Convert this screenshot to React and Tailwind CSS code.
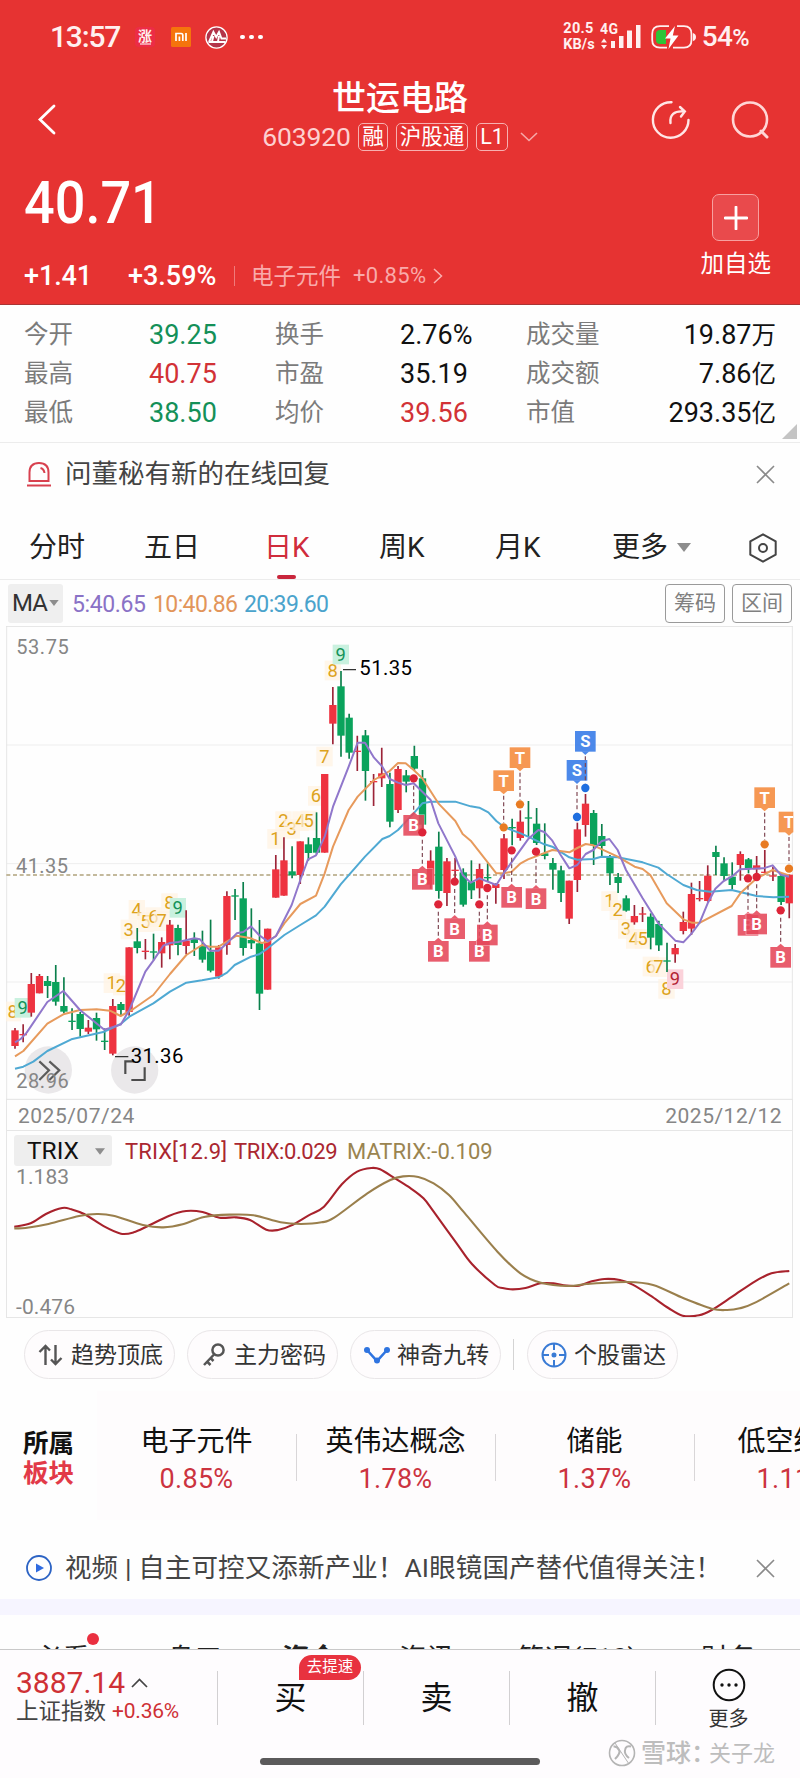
import React from "react";

const R = "#ee3340";
const G = "#0aa35c";

// [bodyTop, bodyBottom, high, low, up] — y grows downward; equal body values draw a doji
const CANDLES = [
  [1231, 1278, 1224, 1286, 1], [1244, 1244, 1213, 1267, 1], [1092, 1178, 1059, 1190, 1], [1068, 1120, 1062, 1120, 1],
  [1083, 1098, 1068, 1134, 0], [1086, 1145, 1035, 1157, 0], [1158, 1175, 1072, 1180, 0], [1204, 1204, 1165, 1230, 0],
  [1182, 1227, 1176, 1250, 0], [1223, 1235, 1200, 1242, 1], [1194, 1228, 1178, 1262, 0], [1264, 1264, 1225, 1290, 0],
  [1158, 1301, 1137, 1306, 1], [1152, 1170, 1146, 1187, 0], [982, 1176, 982, 1187, 1], [964, 984, 924, 1000, 0],
  [994, 994, 957, 1018, 1], [996, 996, 941, 1021, 0], [966, 1000, 952, 1043, 1], [914, 976, 900, 1018, 1],
  [924, 975, 914, 1006, 0], [962, 978, 871, 1003, 1], [957, 969, 937, 1008, 0], [978, 1019, 932, 1028, 0],
  [995, 1052, 899, 1057, 0], [982, 1070, 975, 1076, 1], [828, 975, 814, 1004, 1], [828, 828, 807, 900, 0],
  [835, 984, 786, 1007, 0], [960, 970, 865, 987, 0], [970, 1121, 900, 1170, 0], [926, 1109, 926, 1109, 1],
  [748, 833, 705, 833, 1], [721, 827, 652, 827, 1], [754, 766, 679, 775, 0], [664, 765, 664, 792, 1],
  [673, 699, 652, 722, 0], [654, 698, 577, 703, 0], [462, 698, 462, 698, 1], [255, 311, 201, 373, 1],
  [199, 347, 153, 410, 0], [293, 398, 281, 416, 0], [394, 394, 347, 453, 1], [346, 453, 330, 542, 0],
  [485, 485, 462, 558, 1], [460, 475, 383, 501, 1], [492, 605, 458, 622, 0], [447, 570, 438, 579, 1],
  [466, 485, 450, 517, 0], [408, 446, 377, 452, 0], [475, 614, 450, 625, 0], [722, 794, 691, 806, 1],
  [680, 813, 635, 836, 0], [724, 819, 714, 858, 1], [751, 751, 714, 775, 1], [757, 854, 745, 860, 0],
  [786, 811, 721, 837, 0], [747, 805, 731, 835, 1], [773, 773, 730, 783, 0], [792, 804, 790, 851, 1],
  [655, 750, 642, 777, 1], [623, 623, 596, 676, 0], [605, 654, 571, 662, 1], [594, 594, 543, 650, 0],
  [611, 669, 564, 675, 0], [700, 708, 610, 718, 0], [729, 749, 714, 809, 0], [751, 819, 737, 846, 0],
  [782, 896, 782, 912, 1], [628, 780, 608, 816, 1], [551, 615, 522, 650, 1], [579, 676, 570, 735, 0],
  [648, 678, 612, 710, 0], [714, 760, 705, 795, 0], [771, 789, 759, 819, 0], [835, 872, 826, 875, 0],
  [888, 907, 855, 914, 1], [882, 882, 861, 906, 1], [890, 953, 880, 988, 0], [912, 976, 902, 993, 0],
  [1023, 1023, 968, 1056, 0], [984, 1003, 972, 1028, 1], [906, 933, 875, 943, 1], [822, 926, 788, 945, 1],
  [836, 836, 783, 844, 1], [767, 843, 736, 845, 1], [696, 711, 677, 765, 0], [730, 768, 712, 780, 0],
  [770, 795, 727, 809, 0], [702, 735, 694, 782, 1], [718, 746, 714, 760, 0], [736, 748, 708, 775, 1],
  [757, 757, 690, 760, 1], [768, 768, 740, 783, 1], [768, 846, 760, 855, 0], [764, 850, 764, 895, 1],
];

const MA5 =
  "45,1267 62,1257 80,1238 142,1146 190,1113 240,1170 313,1229 362,1214 388,1170 436,1055 460,1022 490,977 510,969 535,966 583,955 600,958 630,992 656,992 681,970 710,940 730,936 753,919 777,945 803,964 828,948 875,855 901,780 924,718 948,706 974,650 999,560 1046,440 1073,368 1095,368 1122,413 1147,440 1169,477 1194,488 1217,495 1241,490 1292,540 1315,610 1366,710 1388,765 1412,788 1438,775 1489,795 1513,757 1584,658 1615,630 1633,636 1657,662 1682,705 1708,745 1732,735 1757,702 1780,690 1804,664 1828,657 1853,690 1878,750 1928,835 1975,910 2026,962 2050,967 2075,940 2099,908 2123,850 2146,806 2171,783 2195,770 2221,748 2290,745 2318,736 2342,764 2367,770";
const MA10 =
  "45,1309 70,1293 142,1211 190,1183 240,1170 290,1168 330,1172 362,1188 400,1167 460,1125 510,1062 559,1005 606,975 630,980 656,980 710,947 753,955 785,969 803,965 828,948 853,910 901,852 948,827 974,760 999,680 1046,570 1073,530 1122,480 1169,453 1194,429 1217,430 1241,450 1267,475 1315,550 1366,603 1388,642 1412,662 1489,760 1513,760 1535,755 1562,730 1584,718 1657,690 1708,697 1732,684 1757,672 1780,676 1853,710 1904,740 1928,747 1951,765 2000,850 2050,898 2075,908 2100,908 2195,858 2221,820 2270,775 2318,750 2367,766";
const MA20 =
  "45,1346 70,1340 100,1325 142,1293 214,1258 313,1235 362,1212 388,1190 460,1150 510,1115 559,1088 606,1081 656,1072 681,1058 704,1035 753,1010 777,1003 803,985 853,945 901,915 948,886 974,860 1022,793 1095,710 1147,657 1169,648 1194,630 1241,580 1267,550 1292,545 1366,545 1412,559 1438,563 1465,577 1489,603 1513,622 1562,640 1584,650 1633,673 1657,680 1708,712 1732,719 1780,717 1804,710 1853,712 1928,727 1975,743 2000,762 2050,795 2090,810 2130,815 2195,810 2270,828 2320,832 2367,830";

const BUYS = [[1241, 475], [1267, 637], [1315, 853], [1364, 785], [1438, 853], [1462, 804], [1535, 691], [1608, 695], [2244, 775], [2270, 771], [2342, 871]];
const TRADES = [[1511, 622], [1560, 553], [2294, 673], [2367, 746]];
const SELLS = [[1731, 591], [1756, 504]];

const COUNTS = [
  [8, 38, 1193], [9, 68, 1182, "g"], [1, 335, 1108], [2, 363, 1115], [3, 386, 947], [4, 410, 888], [5, 436, 925],
  [6, 460, 910], [7, 485, 922], [8, 508, 868], [9, 533, 882, "g"], [1, 826, 675], [2, 850, 622], [3, 875, 645],
  [4, 901, 622], [5, 926, 620], [6, 948, 546], [7, 973, 428], [8, 998, 170], [9, 1022, 122, "g"], [1, 1828, 862],
  [2, 1853, 889], [3, 1878, 945], [4, 1902, 975], [5, 1928, 975], [6, 1952, 1058], [7, 1975, 1060], [8, 1999, 1125],
  [9, 2025, 1096, "r"],
];

const COUNT_STYLE = {
  g: { bg: "#c9f1df", fg: "#14935a" },
  r: { bg: "#fbd2da", fg: "#b32435" },
  y: { bg: "#fff3e2", fg: "#dda31c" },
};

function Flag({ x, dot, up, color, dotColor, label }) {
  const top = up ? dot - 171 : dot + 110;
  const tip = up
    ? `${x - 12},${top + 61} ${x + 12},${top + 61} ${x},${top + 72}`
    : `${x - 12},${top + 1} ${x + 12},${top + 1} ${x},${top - 10}`;
  return (
    <g>
      <line x1={x} x2={x} y1={up ? top + 76 : dot + 22} y2={up ? dot - 14 : top - 10} stroke="#7d4450" strokeWidth="3.5" strokeDasharray="12 8" />
      <circle cx={x} cy={dot} r="12.5" fill={dotColor} />
      <g opacity="0.88">
        <rect x={x - 33} y={top - 2} width="66" height="66" fill="#fff" opacity="0.6" />
        <rect x={x - 31} y={top} width="62" height="62" fill={color} />
        <polygon points={tip} fill={color} />
      </g>
      <text x={x} y={top + 49} fontSize="50" fontWeight="700" fill="#fff" textAnchor="middle">{label}</text>
    </g>
  );
}

function KChart() {
  return (
    <svg viewBox="18 18 2364 1422" className="block h-[474px] w-[788px] font-['Roboto','Noto_Sans_CJK_SC',sans-serif]">
      <defs>
        <clipPath id="plot"><rect x="18" y="18" width="2362" height="1422" /></clipPath>
      </defs>
      <g stroke="#eeeeee" strokeWidth="3">
        <path d="M19 375H2378M19 731H2378M19 1086H2378" />
        <path d="M20 18V1440M2377 18V1440" stroke="#e6e6e6" />
        <path d="M18 19H2378M18 1438H2378" stroke="#e2e2e2" />
      </g>
      <circle cx="145" cy="1350" r="71" fill="#eae8ea" />
      <circle cx="404" cy="1350" r="71" fill="#eae8ea" />
      <path d="M118 1324L147 1351L118 1380M148 1324L178 1351L148 1380" fill="none" stroke="#5c5c5c" strokeWidth="6.5" />
      <path d="M376 1362V1324H402M434 1342V1380H394" fill="none" stroke="#4c4c4c" strokeWidth="6.5" />
      <g fontSize="60" fill="#868686">
        <text x="49" y="102" textLength="157">53.75</text>
        <text x="48" y="760" textLength="156">41.35</text>
        <text x="49" y="1404" textLength="157">28.96</text>
      </g>
      <path d="M19 765H2378" stroke="#b0a27c" strokeWidth="4" strokeDasharray="12 8" />
      <g clipPath="url(#plot)">
        {COUNTS.map(([n, x, y, k], i) => {
          const c = COUNT_STYLE[k || "y"];
          return (
            <g key={i}>
              <rect x={x - 24} y={y - 48} width="49" height="59" fill={c.bg} opacity={k ? 1 : 0.72} />
              <text x={x} y={y} fontSize="55" fill={c.fg} textAnchor="middle">{n}</text>
            </g>
          );
        })}
        {CANDLES.map(([a, b, h, l, up], i) => {
          const x = 45 + 24.45 * i;
          const flat = a === b;
          return (
            <g key={i}>
              <line x1={x} x2={x} y1={h} y2={l} stroke={up ? "#9c2438" : "#0a7f4b"} strokeWidth="5" />
              <rect x={x - 11} y={flat ? a - 2 : a} width="22" height={flat ? 4 : b - a} fill={up ? R : G} />
            </g>
          );
        })}
        <g fill="none" strokeWidth="6" strokeLinejoin="round">
          <polyline points={MA20} stroke="#4fa9d3" />
          <polyline points={MA10} stroke="#e79a5c" />
          <polyline points={MA5} stroke="#9077cb" />
        </g>
        {BUYS.map(([x, d]) => <Flag key={x} x={x} dot={d} color="#e5475a" dotColor="#dd2438" label="B" />)}
        {TRADES.map(([x, d]) => <Flag key={x} x={x} dot={d} up color="#f58a3c" dotColor="#e87b22" label="T" />)}
        {SELLS.map(([x, d]) => <Flag key={x} x={x} dot={d} up color="#3479e8" dotColor="#1f6fe0" label="S" />)}
      </g>
      <path d="M1029 149H1068M345 1310H385" stroke="#333" strokeWidth="3.5" />
      <g fontSize="61" fontWeight="400" fill="#000">
        <text x="1078" y="166" textLength="158">51.35</text>
        <text x="392" y="1328" textLength="158">31.36</text>
      </g>
    </svg>
  );
}

const TRIX = [
  [28, 410], [60, 400], [90, 372], [122, 354], [140, 358], [165, 372], [205, 410], [237, 431], [262, 427], [290, 408], [332, 377],
  [365, 363], [397, 366], [430, 383], [462, 382], [490, 390], [522, 419], [545, 420], [570, 407], [605, 376], [635, 350], [670, 283],
  [700, 245], [728, 234], [745, 238], [775, 266], [805, 295], [830, 325], [850, 365], [895, 460], [925, 522], [970, 585], [985, 594],
  [1005, 598], [1030, 594], [1060, 580], [1085, 580], [1110, 587], [1135, 587], [1160, 574], [1185, 567], [1215, 570], [1240, 584],
  [1275, 617], [1310, 654], [1338, 677], [1370, 676], [1395, 660], [1435, 620], [1480, 574], [1512, 550], [1547, 543],
];
const MATRIX = [
  [28, 415], [50, 414], [95, 402], [155, 378], [190, 372], [222, 377], [280, 405], [320, 412], [360, 402], [400, 381], [450, 374],
  [497, 376], [550, 397], [590, 402], [630, 397], [655, 383], [720, 310], [765, 270], [790, 259], [820, 261], [850, 280], [880, 315],
  [910, 368], [975, 485], [1020, 550], [1060, 578], [1115, 588], [1150, 582], [1230, 576], [1280, 585], [1340, 625], [1395, 656],
  [1425, 660], [1450, 655], [1480, 638], [1547, 580],
];

// Catmull-Rom smoothing through the sampled points
function smooth(raw) {
  const p = raw.map(([x, y]) => [x / 1.96 - 7, y / 3 - 41]);
  let d = `M${p[0][0]} ${p[0][1]}`;
  for (let i = 0; i < p.length - 1; i++) {
    const a = p[i - 1] || p[i], b = p[i], c = p[i + 1], e = p[i + 2] || c;
    d += `C${b[0] + (c[0] - a[0]) / 6} ${b[1] + (c[1] - a[1]) / 6} ${c[0] - (e[0] - b[0]) / 6} ${c[1] - (e[1] - b[1]) / 6} ${c[0]} ${c[1]}`;
  }
  return d;
}

function StatusBar() {
  return (
    <div className="flex h-[74px] items-center pl-[50px] text-[#fff0f0]">
      <span className="w-[85px] text-[30px] font-medium leading-none tracking-[-1.2px]">13:57</span>
      <span className="flex size-[20px] flex-col items-center justify-center rounded-sm bg-[#ec2c46] text-[14px] font-bold leading-[14px]">
        涨<i className="block h-[2px] w-[11px] bg-[#f69aa6]" />
      </span>
      <svg className="ml-[16px] size-[20px]" viewBox="0 0 20 20">
        <rect width="20" height="20" rx="1.5" fill="#f5740c" />
        <path d="M5 14V6.5H10.2Q11.8 6.5 11.8 8.2V14M8.4 9.5V14M15 6V14" fill="none" stroke="#fff" strokeWidth="1.7" />
      </svg>
      <svg className="ml-[14px] size-[23px]" viewBox="0 0 23 23">
        <circle cx="11.5" cy="11.5" r="10.6" fill="#b3344a" stroke="#fff" strokeWidth="1.3" />
        <path d="M4 16L8.400 6L11.200 11L14 6L16.500 12.500H21M3.500 16H20.500M8.500 10L7 15.500M14 10L13 15.500" fill="none" stroke="#fff" strokeWidth="1.900" />
      </svg>
      <span className="ml-[12px] flex gap-[4.5px]">
        <i className="size-[4.5px] rounded-full bg-white" /><i className="size-[4.5px] rounded-full bg-white" /><i className="size-[4.5px] rounded-full bg-white" />
      </span>
      <div className="ml-auto flex flex-col text-[14.500px] font-bold leading-[16.500px]">
        <span className="tracking-[0.300px]">20.5</span>
        <span>KB/s</span>
      </div>
      <svg className="ml-[5px] h-[28px] w-[42px] font-['Roboto',sans-serif]" viewBox="0 0 42 28">
        <text x="0" y="11" fontSize="14" fontWeight="700" fill="#fff0f0" textLength="18">4G</text>
        <path d="M1 19.5L4 15.5L7 19.5ZM1 22L4 26L7 22Z" fill="#fff0f0" />
        <path d="M11 18H15V25H11ZM19 13H23.5V25H19ZM27 7.500H32V25H27ZM36 2H40.500V25H36Z" fill="#fff0f0" />
      </svg>
      <svg className="ml-[9px] h-[26px] w-[45px]" viewBox="0 0 45 26">
        <path d="M18 2.200H9Q1.200 2.200 1.200 10V16Q1.200 23.600 9 23.600H16M26 2.200H33Q40.500 2.200 40.500 10V16Q40.500 23.600 33 23.600H22" fill="none" stroke="#fff0f0" strokeWidth="1.800" />
        <path d="M42 9Q45 10 45 13Q45 16 42 17Z" fill="#fff0f0" />
        <path d="M9 6H15V20H9Q5 20 5 16V10Q5 6 9 6Z" fill="#2dc437" />
        <path d="M24 2L14 14.500H19.500L17.500 25L27.500 11.500H21.800Z" fill="#fff" />
      </svg>
      <span className="ml-[6px] mr-[51px] text-[28px] font-medium leading-none tracking-[-0.600px]">54<span className="text-[23.500px]">%</span></span>
    </div>
  );
}

function Tag({ children }) {
  return <span className="flex h-[28px] shrink-0 items-center whitespace-nowrap rounded-[5px] border border-[#f7b0b0] px-[3px] text-[21.500px] leading-none">{children}</span>;
}

function Header() {
  return (
    <header className="flex h-[305px] flex-col border-b border-[#a93434] bg-[#e63332] text-white">
      <StatusBar />
      <div className="flex h-[82px] items-start pl-[37px]">
        <svg className="mt-[29px] h-[34px] w-[20px] shrink-0" viewBox="0 0 20 34"><path d="M17 3L3 16.500L17 30" fill="none" stroke="#fff" strokeWidth="2.800" strokeLinecap="round" /></svg>
        <div className="ml-[200px] flex w-[286px] shrink-0 flex-col items-center">
          <div className="mt-[7px] text-[34px] font-medium leading-[34px]">世运电路</div>
          <div className="mt-[8px] flex items-center gap-[8px]">
            <span className="w-[88px] text-[26.500px] leading-[28px] tracking-[-0.100px] text-[#fdd0d0]">603920</span>
            <Tag>融</Tag><Tag>沪股通</Tag><Tag>L1</Tag>
            <svg className="ml-[4px] h-[10px] w-[18px]" viewBox="0 0 18 10"><path d="M1 1L9 8.500L17 1" fill="none" stroke="#f6a8a8" strokeWidth="1.600" /></svg>
          </div>
        </div>
        <svg className="ml-[108px] mt-[26px] size-[40px] shrink-0" viewBox="0 0 40 40">
          <g fill="none" stroke="#ffe6e6" strokeWidth="2.400" strokeLinecap="round">
            <path d="M20.500 2.200A17.800 17.800 0 1 0 37.500 20" />
            <path d="M19.500 23C18.500 15 23 10.500 33 11.500M29 7L33.800 11.500L30 16.500" />
          </g>
        </svg>
        <svg className="ml-[40px] mt-[26px] size-[40px] shrink-0" viewBox="0 0 40 40">
          <circle cx="19" cy="19.500" r="17" fill="none" stroke="#ffd6d6" strokeWidth="2.600" /><path d="M30 31L36 37" stroke="#ffd6d6" strokeWidth="3" strokeLinecap="round" />
        </svg>
      </div>
      <div className="flex flex-1 justify-between pl-[24px] pr-[29px]">
        <div className="flex flex-col">
          <div className="mt-[17px] origin-left scale-x-[0.900] text-[60px] font-medium leading-[60px]">40.71</div>
          <div className="mt-[29px] flex items-center leading-[28px]">
            <span className="w-[104px] text-[27px] font-medium tracking-[-0.100px]">+1.41</span>
            <span className="w-[106px] text-[27px] font-medium">+3.59%</span>
            <i className="h-[20px] w-px bg-[#f07a7a]" />
            <span className="ml-[16px] text-[22.5px] text-[#f9aaaa]">电子元件</span>
            <span className="ml-[12px] text-[22px] tracking-[0.300px] text-[#f9aaaa]">+0.85%</span>
            <svg className="ml-[7px] h-[16px] w-[10px]" viewBox="0 0 10 16"><path d="M1 1L8.500 8L1 15" fill="none" stroke="#f9b0b0" strokeWidth="1.500" /></svg>
          </div>
        </div>
        <div className="flex flex-col items-center">
          <div className="mt-[38px] flex size-[47px] items-center justify-center rounded-[7px] border border-[#f7a0a0] bg-[#e94a4c]">
            <svg className="size-[24px]" viewBox="0 0 24 24"><path d="M12 1V23M1 12H23" stroke="#fff" strokeWidth="2.800" strokeLinecap="round" /></svg>
          </div>
          <span className="mt-[11px] text-[23.500px] leading-[24px]">加自选</span>
        </div>
      </div>
    </header>
  );
}

const STATS = [
  ["今开", "39.25", "text-[#149058]", "换手", "2.76%", "text-[#111]", "成交量", "19.87", "万"],
  ["最高", "40.75", "text-[#d23236]", "市盈", "35.19", "text-[#111]", "成交额", "7.86", "亿"],
  ["最低", "38.50", "text-[#149058]", "均价", "39.56", "text-[#d23236]", "市值", "293.35", "亿"],
];

function Stats() {
  return (
    <section className="flex h-[138px] flex-col border-b border-[#ececec] pt-[11px]">
      {STATS.map((s) => (
        <div key={s[0]} className="flex h-[39px] shrink-0 items-center px-[24px] text-[24.500px] leading-none text-[#7b7b7b]">
          <span className="w-[125px]">{s[0]}</span>
          <span className={"w-[126px] text-[27px] font-[450] " + s[2]}>{s[1]}</span>
          <span className="w-[125px]">{s[3]}</span>
          <span className={"w-[126px] text-[27px] font-[450] " + s[5]}>{s[4]}</span>
          <span>{s[6]}</span>
          <span className="ml-auto text-[#111]"><span className="text-[27px] font-[450]">{s[7]}</span>{s[8]}</span>
        </div>
      ))}
      <svg className="-mt-[9px] ml-auto mr-[3px] size-[15px] shrink-0" viewBox="0 0 15 15"><path d="M15 0V15H0Z" fill="#c4c4c4" /></svg>
    </section>
  );
}

function Cross() {
  return <svg className="ml-auto size-[19px]" viewBox="0 0 19 19"><path d="M1 1L18 18M18 1L1 18" stroke="#8a8a8a" strokeWidth="1.600" /></svg>;
}

function Down({ className }) {
  return <svg className={className} viewBox="0 0 14 9"><path d="M0 0H14L7 9Z" fill="#8d8d8d" /></svg>;
}

function PeriodTabs() {
  return (
    <nav className="flex h-[75px] items-center border-b border-[#ececec] pl-[29px] pt-[11px] text-[28px] leading-none text-[#222]">
      <span className="w-[115px]">分时</span>
      <span className="w-[120px]">五日</span>
      <span className="relative w-[115px] text-[#d02c3c]">日K<i className="absolute left-[13px] top-[41px] h-[4px] w-[19px] rounded-full bg-[#c9263c]" /></span>
      <span className="w-[116px]">周K</span>
      <span className="w-[117px]">月K</span>
      <span>更多</span>
      <Down className="ml-[9px] h-[9px] w-[14px]" />
      <svg className="ml-[58px] h-[30px] w-[28px]" viewBox="0 0 28 30">
        <path d="M14 1.300L26.700 8.300V21.700L14 28.700L1.300 21.700V8.300Z" fill="none" stroke="#444" strokeWidth="2" strokeLinejoin="round" />
        <circle cx="14" cy="15" r="4" fill="none" stroke="#444" strokeWidth="2" />
      </svg>
    </nav>
  );
}

function IndicatorBar() {
  return (
    <div className="flex h-[46px] items-center px-[8px] text-[23px] leading-none">
      <span className="flex h-[39px] w-[55px] items-center rounded-[3px] bg-[#efefef] pl-[4px] text-[24px] tracking-[-0.800px] text-[#333]">MA<Down className="ml-[2px] h-[6px] w-[10px]" /></span>
      <span className="ml-[9px] w-[81px] pt-[2px] tracking-[-0.400px] text-[#8a72c6]">5:40.65</span>
      <span className="w-[91px] pt-[2px] tracking-[-0.600px] text-[#e2955a]">10:40.86</span>
      <span className="pt-[2px] tracking-[-0.600px] text-[#4aa3cc]">20:39.60</span>
      <span className="ml-auto flex h-[39px] w-[60px] items-center justify-center rounded-[4px] border border-[#9a9a9a] text-[21px] text-[#808080]">筹码</span>
      <span className="ml-[7px] flex h-[39px] w-[60px] items-center justify-center rounded-[4px] border border-[#9a9a9a] text-[21px] text-[#808080]">区间</span>
    </div>
  );
}

function TrixPanel() {
  return (
    <div className="mx-[6px] flex h-[187px] w-[787px] flex-col border border-t-0 border-[#e6e6e6] leading-none">
      <div className="flex h-[36px] items-end pl-[7px]">
        <span className="flex h-[31px] w-[98px] items-center justify-between rounded-[3px] bg-[#eeeeee] pl-[13px] pr-[7px] pt-[1px] text-[24.500px] text-[#111]"><span>TRIX</span><Down className="h-[7px] w-[10px]" /></span>
        <span className="ml-[13px] flex h-[29px] items-center text-[22px] text-[#aa2730]"><span className="w-[109px] tracking-[0.100px]">TRIX[12.9]</span><span className="w-[113px] tracking-[-0.400px]">TRIX:0.029</span><span className="text-[#9a8450]">MATRIX:-0.109</span></span>
      </div>
      <div className="grid flex-1">
        <div className="col-start-1 row-start-1 -mb-[1px] flex flex-col justify-between pl-[9px] pt-[1px] text-[21px] tracking-[0.100px] text-[#868686]"><span>1.183</span><span>-0.476</span></div>
        <svg className="col-start-1 row-start-1 -mt-[35px] h-[186px] w-[785px]" viewBox="0 0 785 186" fill="none" strokeWidth="2.100">
          <path d={smooth(TRIX)} stroke="#a8222c" />
          <path d={smooth(MATRIX)} stroke="#9a7f4c" />
        </svg>
      </div>
    </div>
  );
}

function Pill({ icon, children }) {
  return <span className="flex h-[49px] w-[151px] items-center rounded-full border border-[#e9e6e8] bg-[#fefcfd] pl-[12px] text-[23px] leading-none text-[#333]"><svg className="mr-[6px] size-[28px] shrink-0" viewBox="0 0 28 28" fill="none">{icon}</svg><span className="pt-[2px]">{children}</span></span>;
}

function Pills() {
  return (
    <div className="flex h-[73px] items-center pl-[24px]">
      <Pill icon={<path d="M8.500 24V5M2.500 11L8.500 5L13 9.500M18.500 4V23M24.500 17L18.500 23L14 18.500" stroke="#555" strokeWidth="2.400" />}>趋势顶底</Pill>
      <span className="w-[12px]" />
      <Pill icon={<g stroke="#555" strokeWidth="2.500"><circle cx="18" cy="9" r="5.600" /><path d="M14.500 13L4 24M6.500 20L10.500 24M10 16.500L13.500 20" /></g>}>主力密码</Pill>
      <span className="w-[12px]" />
      <Pill icon={<g><path d="M4 9L14 20L24 9" stroke="#2f74e0" strokeWidth="2.600" /><circle cx="4" cy="9" r="3" fill="#2f74e0" /><circle cx="24" cy="9" r="3" fill="#2f74e0" /><circle cx="14" cy="19.500" r="3" fill="#2f74e0" /></g>}>神奇九转</Pill>
      <i className="ml-[12px] mr-[13px] h-[31px] w-px bg-[#d4d4d4]" />
      <Pill icon={<g stroke="#3a7bd5" strokeWidth="2"><circle cx="14" cy="14" r="11.500" /><path d="M14 2V9M14 19V26M2 14H9M19 14H26" /><circle cx="14" cy="14" r="1.500" fill="#3a7bd5" /></g>}>个股雷达</Pill>
    </div>
  );
}

const BOARDS = [["电子元件", "0.85%"], ["英伟达概念", "1.78%"], ["储能", "1.37%"], ["低空经济", "1.11%"]];

function Boards() {
  return (
    <section className="flex h-[129px] leading-none">
      <div className="flex w-[97px] flex-col pl-[23px] pt-[37px] text-[25.500px] font-bold leading-[30px] text-[#111]">所属<span className="text-[#e23a48]">板块</span></div>
      <div className="flex flex-1 items-start overflow-hidden bg-[#fefcfd]">
        {BOARDS.map(([n, v], i) => (
          <div key={n} className="flex shrink-0 items-center">
            <div className="flex h-[129px] w-[199px] flex-col items-center pt-[37px] text-[28px] text-[#111]">
              {n}
              <span className="mt-[10px] text-[27px] font-[450] tracking-[0.300px] text-[#cc3340]">{v}</span>
            </div>
            {i < 3 && <i className="-mr-px mt-[4px] h-[47px] w-px bg-[#d9d6d8]" />}
          </div>
        ))}
      </div>
    </section>
  );
}

function Trade({ children, badge }) {
  return (
    <div className="relative flex h-[54px] w-[146px] items-center justify-center border-r border-[#d2d0d2] text-[32px] text-[#111]">
      {children}
      {badge && <span className="absolute -top-[16px] left-[81px] flex h-[25px] w-[62px] items-center justify-center rounded-full rounded-bl-none bg-[#e8323f] text-[15.500px] text-white">{badge}</span>}
    </div>
  );
}

function BottomBar() {
  return (
    <footer className="flex h-[129px] flex-col border-t border-[#c9c9c9] bg-[#fefcfe] leading-none">
      <div className="flex pt-[21px]">
        <div className="flex h-[54px] w-[218px] flex-col border-r border-[#d2d0d2] pl-[16px]">
          <span className="-mt-[3px] flex items-center text-[30px] font-[450] leading-[30px] text-[#cf3035]">3887.14<svg className="ml-[6px] h-[10px] w-[17px]" viewBox="0 0 17 10"><path d="M1 9L8.500 1.500L16 9" fill="none" stroke="#444" strokeWidth="1.700" /></svg></span>
          <span className="flex items-center text-[22.500px] leading-[26px] text-[#444]">上证指数<span className="ml-[6px] text-[21px] font-[450] tracking-[-0.200px] text-[#cf3035]">+0.36%</span></span>
        </div>
        <Trade badge="去提速">买</Trade>
        <Trade>卖</Trade>
        <Trade>撤</Trade>
        <div className="flex flex-1 flex-col items-center pl-[1px]">
          <svg className="-mt-[3px] size-[34px]" viewBox="0 0 34 34"><circle cx="17" cy="17" r="15.300" fill="none" stroke="#111" strokeWidth="2" /><g fill="#111"><circle cx="10" cy="17" r="1.700" /><circle cx="17" cy="17" r="1.700" /><circle cx="24" cy="17" r="1.700" /></g></svg>
          <span className="mt-[7px] text-[20px] text-[#333]">更多</span>
        </div>
      </div>
      <div className="flex items-start pl-[260px]">
        <i className="mt-[29px] h-[7px] w-[280px] rounded-full bg-[#5b5a5b]" />
        <svg className="ml-[68px] mt-[10px] size-[28px]" viewBox="0 0 28 28" fill="none" stroke="#b4b4b4"><circle cx="14" cy="14" r="12.500" strokeWidth="1.600" /><path d="M5.500 7.500Q9 7 11 11Q13 14 7 20M23 7.500Q18 6 17 11Q16 15 21 19" strokeWidth="2" /><path d="M7 4L21 25" strokeWidth="1" /></svg>
        <span className="ml-[5px] mt-[12px] flex items-center whitespace-nowrap text-[25px] font-medium text-[#bdbdbd]">雪球：<span className="-ml-[7px] text-[22px] font-normal">关子龙</span></span>
      </div>
    </footer>
  );
}

export default function App() {
  return (
    <div className="h-[1778px] w-[800px] overflow-hidden bg-[#fefefe] font-['Roboto','Noto_Sans_CJK_SC',sans-serif]">
      <Header />
      <Stats />
      <div className="flex h-[62px] items-center pl-[26px] pr-[25px] text-[26.500px] leading-none text-[#444]">
        <svg className="mr-[13px] size-[26px]" viewBox="0 0 26 26" fill="none" stroke="#d8414f" strokeWidth="2"><path d="M3.500 20V11.500Q3.500 2 13 2Q22.500 2 22.500 11.500V20ZM1 24.500H25M14.500 7Q18 8 18.500 12" /></svg>
        问董秘有新的在线回复
        <Cross />
      </div>
      <PeriodTabs />
      <IndicatorBar />
      <div className="pl-[6px]"><KChart /></div>
      <div className="mx-[6px] flex h-[31px] w-[787px] items-center justify-between border border-t-0 border-[#e6e6e6] pl-[11px] pr-[10px] pt-[3px] text-[21px] leading-none tracking-[0.500px] text-[#868686]"><span>2025/07/24</span><span>2025/12/12</span></div>
      <TrixPanel />
      <Pills />
      <Boards />
      <div className="flex h-[79px] items-center pl-[26px] pr-[25px] pt-[17px] text-[26.500px] leading-none text-[#444]">
        <svg className="mr-[13px] size-[26px]" viewBox="0 0 26 26"><circle cx="13" cy="13" r="12" fill="none" stroke="#2c63c4" strokeWidth="1.800" /><path d="M10 8.500L18 13L10 17.500Z" fill="#2f6be0" /></svg>
        <span className="whitespace-pre tracking-[0.120px]">视频 | 自主可控又添新产业！AI眼镜国产替代值得关注！</span>
        <Cross />
      </div>
      <div className="h-[16px] bg-[#f6f5ff]" />
      <div className="flex h-[34px] items-start overflow-hidden pl-[35px] pt-[27px] text-[27.500px] leading-[34px] text-[#222]">
        <span className="relative w-[132px]">必看<i className="absolute -top-[9px] left-[52px] size-[12px] rounded-full bg-[#ea3040]" /></span>
        <span className="w-[115px]">盘口</span>
        <span className="w-[117px] font-bold">资金</span>
        <span className="w-[118px]">资讯</span>
        <span className="w-[184px]">简况(F10)</span>
        <span>财务</span>
      </div>
      <BottomBar />
    </div>
  );
}
